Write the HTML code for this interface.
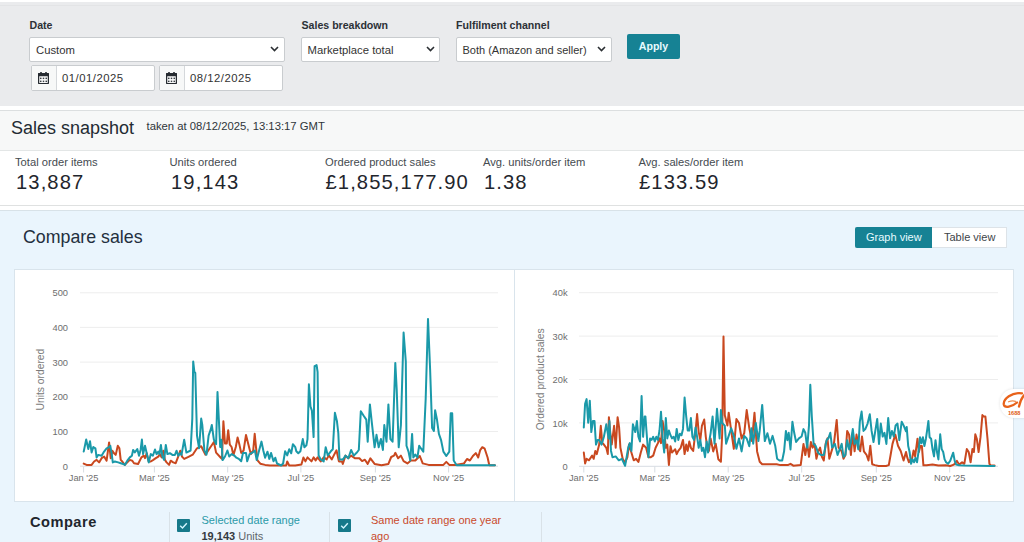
<!DOCTYPE html>
<html><head><meta charset="utf-8">
<style>
html,body{margin:0;padding:0;width:1024px;height:542px;overflow:hidden;background:#fff;}
body{font-family:"Liberation Sans",sans-serif;color:#0f1111;position:relative;}
.a{position:absolute;white-space:nowrap;}
#filters{position:absolute;left:0;top:2px;width:1024px;height:103.5px;background:#eaebed;}
#filters .line{position:absolute;left:0;top:3px;width:1024px;height:1px;background:#e3e4e6;}
.lbl{position:absolute;font-weight:bold;font-size:10.6px;color:#2c3137;}
.sel{position:absolute;background:#fff;border:1px solid #c9cccf;border-radius:2px;box-sizing:border-box;height:25px;}
.sel span{position:absolute;left:6px;top:5.5px;font-size:11.3px;color:#333;}
.chev{position:absolute;top:8px;width:9px;height:6px;}
.dt{position:absolute;background:#fff;border:1px solid #c9cccf;border-radius:2px;box-sizing:border-box;height:26px;top:63px;}
.dt .ic{position:absolute;left:0;top:0;width:23.5px;height:24px;background:#f7f8f8;border-right:1px solid #d5d8db;}
.dt span{position:absolute;left:30px;top:6px;font-size:11.3px;letter-spacing:0.5px;color:#333;}
#apply{position:absolute;left:627px;top:34px;width:53px;height:25px;background:#168294;border-radius:2px;color:#e8fbff;font-weight:bold;font-size:10.6px;text-align:center;line-height:24px;}
#snaphead{position:absolute;left:0;top:110px;width:1024px;height:41px;background:#f7f8f8;border-top:1px solid #dcdfe0;border-bottom:1px solid #e3e6e6;box-sizing:border-box;}
#metrics{position:absolute;left:0;top:151px;width:1024px;height:55px;background:#fff;border-bottom:1px solid #dfe1e1;box-sizing:border-box;}
.mlbl{position:absolute;top:5px;font-size:11.2px;color:#454b50;}
.mval{position:absolute;top:20px;font-size:20.2px;letter-spacing:1.1px;color:#1f262d;}
#blue{position:absolute;left:0;top:210px;width:1024px;height:332px;background:#eaf5fd;border-top:1px solid #d8e2e8;box-sizing:border-box;}
.panel{position:absolute;background:#fff;border:1px solid #d9e4ec;box-sizing:border-box;}
.cb{position:absolute;width:13px;height:13px;background:#16798a;border-radius:1px;}
.cb svg{position:absolute;left:0;top:0;}
#badge{position:absolute;left:1000px;top:389px;width:40px;height:29px;background:#fff;border-radius:14px 0 0 14px;box-shadow:0 0 3px rgba(0,0,0,0.12);}
</style></head><body>
<div id="filters"><div class="line"></div>
  <div class="lbl" style="left:29.5px;top:17px;">Date</div>
  <div class="sel" style="left:29px;top:35px;width:256px;"><span>Custom</span>
    <svg class="chev" style="left:240px" viewBox="0 0 9 6"><path d="M1 1 L4.5 4.5 L8 1" fill="none" stroke="#2b2f33" stroke-width="1.6"/></svg></div>
  <div class="dt" style="left:31px;width:124px;"><div class="ic"><svg style="position:absolute;left:6.2px;top:6.2px;" width="11" height="12.2" viewBox="0 0 11 12.2"><rect x="0.6" y="1.6" width="9.8" height="10" rx="0.8" fill="#fff" stroke="#262b31" stroke-width="1.3"/><rect x="0" y="1" width="11" height="3.3" rx="0.6" fill="#262b31"/><rect x="2.2" y="0" width="1.6" height="2" fill="#262b31"/><rect x="7.2" y="0" width="1.6" height="2" fill="#262b31"/><g fill="#3a4046"><rect x="2" y="5.6" width="1.5" height="1.5"/><rect x="4.75" y="5.6" width="1.5" height="1.5"/><rect x="7.5" y="5.6" width="1.5" height="1.5"/><rect x="2" y="8.6" width="1.5" height="1.5"/><rect x="4.75" y="8.6" width="1.5" height="1.5"/><rect x="7.5" y="8.6" width="1.5" height="1.5"/></g></svg></div><span>01/01/2025</span></div>
  <div class="dt" style="left:159px;width:124px;"><div class="ic"><svg style="position:absolute;left:6.2px;top:6.2px;" width="11" height="12.2" viewBox="0 0 11 12.2"><rect x="0.6" y="1.6" width="9.8" height="10" rx="0.8" fill="#fff" stroke="#262b31" stroke-width="1.3"/><rect x="0" y="1" width="11" height="3.3" rx="0.6" fill="#262b31"/><rect x="2.2" y="0" width="1.6" height="2" fill="#262b31"/><rect x="7.2" y="0" width="1.6" height="2" fill="#262b31"/><g fill="#3a4046"><rect x="2" y="5.6" width="1.5" height="1.5"/><rect x="4.75" y="5.6" width="1.5" height="1.5"/><rect x="7.5" y="5.6" width="1.5" height="1.5"/><rect x="2" y="8.6" width="1.5" height="1.5"/><rect x="4.75" y="8.6" width="1.5" height="1.5"/><rect x="7.5" y="8.6" width="1.5" height="1.5"/></g></svg></div><span>08/12/2025</span></div>

  <div class="lbl" style="left:301.5px;top:17px;">Sales breakdown</div>
  <div class="sel" style="left:300.5px;top:35px;width:139.5px;"><span>Marketplace total</span>
    <svg class="chev" style="left:124px" viewBox="0 0 9 6"><path d="M1 1 L4.5 4.5 L8 1" fill="none" stroke="#2b2f33" stroke-width="1.6"/></svg></div>

  <div class="lbl" style="left:456px;top:17px;">Fulfilment channel</div>
  <div class="sel" style="left:455.5px;top:35px;width:156px;"><span style="font-size:11px">Both (Amazon and seller)</span>
    <svg class="chev" style="left:140px" viewBox="0 0 9 6"><path d="M1 1 L4.5 4.5 L8 1" fill="none" stroke="#2b2f33" stroke-width="1.6"/></svg></div>
  <div id="apply" style="top:32px;">Apply</div>
</div>

<div id="snaphead">
  <div class="a" style="left:11px;top:7px;font-size:18px;color:#232b33;">Sales snapshot</div>
  <div class="a" style="left:146.5px;top:8.5px;font-size:11.3px;color:#2f353a;">taken at 08/12/2025, 13:13:17 GMT</div>
</div>

<div id="metrics">
  <div class="mlbl" style="left:15px;">Total order items</div>
  <div class="mval" style="left:16px;">13,887</div>
  <div class="mlbl" style="left:169.5px;">Units ordered</div>
  <div class="mval" style="left:171px;">19,143</div>
  <div class="mlbl" style="left:325px;">Ordered product sales</div>
  <div class="mval" style="left:325.5px;">£1,855,177.90</div>
  <div class="mlbl" style="left:483px;">Avg. units/order item</div>
  <div class="mval" style="left:484px;">1.38</div>
  <div class="mlbl" style="left:638.5px;">Avg. sales/order item</div>
  <div class="mval" style="left:639px;">£133.59</div>
</div>

<div id="blue">
  <div class="a" style="left:23px;top:16px;font-size:17.8px;color:#232f3e;">Compare sales</div>
  <div class="a" style="left:854.5px;top:16px;width:152px;height:21px;border:1px solid #dde3e8;background:#fff;box-sizing:border-box;"></div>
  <div class="a" style="left:854.5px;top:16px;width:77.5px;height:21px;background:#168294;border-radius:2px 0 0 2px;"></div>
  <div class="a" style="left:866px;top:20px;font-size:11px;color:#e6fbff;">Graph view</div>
  <div class="a" style="left:944px;top:20px;font-size:11px;color:#3d4449;">Table view</div>

  <div class="panel" style="left:14px;top:58px;width:501px;height:233px;border-right:none;"></div>
  <div class="panel" style="left:514px;top:58px;width:500px;height:233px;"></div>
  <div id="charts"></div>
</div>


<div id="bottom">
  <div class="a" style="left:30px;top:513.5px;font-size:14.6px;letter-spacing:0.5px;font-weight:bold;color:#1f262d;">Compare</div>
  <div class="a" style="left:168.5px;top:512px;width:1px;height:30px;background:#d9e2e8;"></div>
  <div class="a" style="left:328.5px;top:512px;width:1px;height:30px;background:#d9e2e8;"></div>
  <div class="a" style="left:541px;top:512px;width:1px;height:30px;background:#d9e2e8;"></div>
  <div class="cb" style="left:177px;top:518.5px;"><svg width="13" height="13" viewBox="0 0 13 13"><path d="M3.2 6.8 L5.5 9 L9.8 4.3" fill="none" stroke="#d4f6ff" stroke-width="1.4"/></svg></div>
  <div class="a" style="left:201.5px;top:514px;font-size:11px;color:#2b9aa8;">Selected date range</div>
  <div class="a" style="left:201.5px;top:530px;font-size:11px;color:#60666b;"><b style="color:#343a40;">19,143</b> Units</div>
  <div class="cb" style="left:337.5px;top:518.5px;"><svg width="13" height="13" viewBox="0 0 13 13"><path d="M3.2 6.8 L5.5 9 L9.8 4.3" fill="none" stroke="#d4f6ff" stroke-width="1.4"/></svg></div>
  <div class="a" style="left:371px;top:514px;font-size:11px;color:#c94a2c;">Same date range one year</div>
  <div class="a" style="left:371px;top:530px;font-size:11px;color:#c94a2c;">ago</div>
</div>
<div id="badge">
  <svg style="position:absolute;left:2px;top:2px" width="24" height="26" viewBox="0 0 24 26"><path d="M20 2.3 C10 0.8 1 8 1.8 13.5 C2.6 17.5 10 16 15 11.5" fill="none" stroke="#e8621a" stroke-width="2.3" stroke-linecap="round"/><path d="M6.5 10.8 C9 9.8 11.5 9.8 13.5 10.3" fill="none" stroke="#ef8a4a" stroke-width="1.2" stroke-linecap="round"/><path d="M17 15.5 C18 11 20 6 23 3.5" fill="none" stroke="#e8621a" stroke-width="2.3" stroke-linecap="round"/><text x="6" y="23.5" font-family="Liberation Sans" font-weight="bold" font-size="5.6" fill="#e0601a">1688</text></svg>
</div>





<!--CHARTS--><svg id="chartsvg" width="1024" height="542" viewBox="0 0 1024 542" style="position:absolute;left:0;top:0;">
<style>.yl,.xl{font-family:"Liberation Sans",sans-serif;font-size:9.3px;fill:#6e6e6e;}.at{font-family:"Liberation Sans",sans-serif;font-size:10.3px;fill:#7a7a7a;}</style>
<line x1="80" y1="466.2" x2="498" y2="466.2" stroke="#d8dde3" stroke-width="1"/>
<text x="68" y="469.8" text-anchor="end" class="yl">0</text>
<line x1="80" y1="431.5" x2="498" y2="431.5" stroke="#ededed" stroke-width="1"/>
<text x="68" y="435.1" text-anchor="end" class="yl">100</text>
<line x1="80" y1="396.8" x2="498" y2="396.8" stroke="#ededed" stroke-width="1"/>
<text x="68" y="400.40000000000003" text-anchor="end" class="yl">200</text>
<line x1="80" y1="362.1" x2="498" y2="362.1" stroke="#ededed" stroke-width="1"/>
<text x="68" y="365.70000000000005" text-anchor="end" class="yl">300</text>
<line x1="80" y1="327.4" x2="498" y2="327.4" stroke="#ededed" stroke-width="1"/>
<text x="68" y="331.0" text-anchor="end" class="yl">400</text>
<line x1="80" y1="292.8" x2="498" y2="292.8" stroke="#ededed" stroke-width="1"/>
<text x="68" y="296.40000000000003" text-anchor="end" class="yl">500</text>
<line x1="83.6" y1="466.3" x2="83.6" y2="472.5" stroke="#d8dde3" stroke-width="1"/>
<text x="83.6" y="481" text-anchor="middle" class="xl">Jan '25</text>
<line x1="154.4" y1="466.3" x2="154.4" y2="472.5" stroke="#d8dde3" stroke-width="1"/>
<text x="154.4" y="481" text-anchor="middle" class="xl">Mar '25</text>
<line x1="227.7" y1="466.3" x2="227.7" y2="472.5" stroke="#d8dde3" stroke-width="1"/>
<text x="227.7" y="481" text-anchor="middle" class="xl">May '25</text>
<line x1="300.9" y1="466.3" x2="300.9" y2="472.5" stroke="#d8dde3" stroke-width="1"/>
<text x="300.9" y="481" text-anchor="middle" class="xl">Jul '25</text>
<line x1="375.4" y1="466.3" x2="375.4" y2="472.5" stroke="#d8dde3" stroke-width="1"/>
<text x="375.4" y="481" text-anchor="middle" class="xl">Sep '25</text>
<line x1="448.6" y1="466.3" x2="448.6" y2="472.5" stroke="#d8dde3" stroke-width="1"/>
<text x="448.6" y="481" text-anchor="middle" class="xl">Nov '25</text>
<text x="0" y="0" transform="translate(43.5,379.6) rotate(-90)" text-anchor="middle" class="at">Units ordered</text>
<line x1="579" y1="466.3" x2="998" y2="466.3" stroke="#d8dde3" stroke-width="1"/>
<text x="567.6" y="469.90000000000003" text-anchor="end" class="yl">0</text>
<line x1="579" y1="422.9" x2="998" y2="422.9" stroke="#ededed" stroke-width="1"/>
<text x="567.6" y="426.5" text-anchor="end" class="yl">10k</text>
<line x1="579" y1="379.5" x2="998" y2="379.5" stroke="#ededed" stroke-width="1"/>
<text x="567.6" y="383.1" text-anchor="end" class="yl">20k</text>
<line x1="579" y1="336.1" x2="998" y2="336.1" stroke="#ededed" stroke-width="1"/>
<text x="567.6" y="339.70000000000005" text-anchor="end" class="yl">30k</text>
<line x1="579" y1="292.7" x2="998" y2="292.7" stroke="#ededed" stroke-width="1"/>
<text x="567.6" y="296.3" text-anchor="end" class="yl">40k</text>
<line x1="583.8" y1="466.3" x2="583.8" y2="472.5" stroke="#d8dde3" stroke-width="1"/>
<text x="583.8" y="481" text-anchor="middle" class="xl">Jan '25</text>
<line x1="654.8" y1="466.3" x2="654.8" y2="472.5" stroke="#d8dde3" stroke-width="1"/>
<text x="654.8" y="481" text-anchor="middle" class="xl">Mar '25</text>
<line x1="728.2" y1="466.3" x2="728.2" y2="472.5" stroke="#d8dde3" stroke-width="1"/>
<text x="728.2" y="481" text-anchor="middle" class="xl">May '25</text>
<line x1="801.7" y1="466.3" x2="801.7" y2="472.5" stroke="#d8dde3" stroke-width="1"/>
<text x="801.7" y="481" text-anchor="middle" class="xl">Jul '25</text>
<line x1="876.3" y1="466.3" x2="876.3" y2="472.5" stroke="#d8dde3" stroke-width="1"/>
<text x="876.3" y="481" text-anchor="middle" class="xl">Sep '25</text>
<line x1="949.7" y1="466.3" x2="949.7" y2="472.5" stroke="#d8dde3" stroke-width="1"/>
<text x="949.7" y="481" text-anchor="middle" class="xl">Nov '25</text>
<text x="0" y="0" transform="translate(543.5,379.3) rotate(-90)" text-anchor="middle" class="at">Ordered product sales</text>
<polyline points="83.7,463.6 86.6,464.9 91.6,464.9 94.1,461.5 96.6,459.9 99.1,462.4 101.6,458.2 104.1,456.6 106.6,460.7 109.1,442.4 110.7,458.2 112.4,450.7 114.0,453.2 115.7,454.9 117.8,445.8 119.4,448.3 120.7,459.9 122.3,461.5 124.8,464.9 127.3,462.4 129.8,459.9 132.3,460.7 134.0,463.2 138.1,464.0 141.4,457.4 143.9,455.7 145.0,458.2 146.7,453.2 148.7,461.5 150.8,461.5 153.3,459.9 155.8,458.2 158.3,456.6 159.9,454.1 161.6,457.4 163.3,450.7 164.9,459.9 166.6,462.4 169.1,464.9 170.7,460.7 173.2,462.4 175.7,463.2 178.2,456.6 180.3,450.7 182.0,456.6 184.2,458.9 188.5,456.8 192.7,454.7 197.0,448.3 201.2,446.2 205.5,454.7 209.7,448.3 213.9,442.0 216.1,452.6 220.8,457.7 222.0,458.9 223.4,421.2 225.0,443.4 226.8,443.4 228.2,430.2 229.8,444.6 231.6,447.0 233.4,455.3 235.8,447.0 237.6,437.4 239.4,444.6 241.2,452.9 243.6,450.5 246.0,435.0 248.4,444.6 250.8,454.1 253.2,450.5 254.7,433.8 256.1,448.2 257.3,460.1 260.3,463.7 265.1,464.9 269.9,465.5 281.1,465.5 286.2,465.5 287.2,461.4 289.2,465.5 295.3,465.5 301.4,464.5 303.4,457.4 305.4,461.4 307.5,457.4 309.5,459.4 311.5,461.4 313.6,457.4 315.6,460.4 317.6,457.4 320.7,461.4 323.7,457.4 326.7,459.4 328.8,455.4 331.8,459.4 333.8,455.4 336.5,450.3 338.9,461.4 342.0,461.4 342.8,463.9 345.5,455.6 348.3,458.3 351.1,455.6 355.2,458.3 359.4,458.3 362.1,461.1 364.9,459.7 367.7,463.9 370.4,458.3 374.6,463.9 381.5,465.3 388.4,463.9 391.2,457.0 394.0,455.6 395.3,452.8 398.1,458.3 400.9,455.6 403.6,461.1 407.4,463.4 410.9,460.5 415.3,460.5 419.8,456.0 422.7,463.4 428.6,464.9 443.4,464.9 446.3,461.9 449.3,464.9 455.2,464.9 464.0,463.4 467.0,459.0 469.9,460.5 472.9,456.0 475.8,453.1 478.2,457.5 480.2,450.1 482.3,447.2 484.7,448.7 487.6,457.5 489.3,465.3 494.9,465.3" fill="none" stroke="#c9481f" stroke-width="2" stroke-linejoin="round" stroke-linecap="round"/>
<polyline points="83.7,451.6 86.2,439.5 88.3,449.1 90.0,441.2 91.6,452.4 93.3,447.0 95.4,448.3 96.6,457.4 98.3,454.9 101.6,455.7 104.1,451.6 106.6,448.3 108.6,447.4 110.3,445.8 111.6,453.2 112.8,462.4 114.9,461.5 118.2,462.4 120.7,463.2 123.2,464.0 124.8,464.9 127.3,460.7 129.8,457.4 131.9,455.7 133.1,449.9 134.8,452.4 137.3,449.1 139.0,455.7 140.6,449.9 141.9,439.5 143.1,454.1 145.0,445.8 146.7,453.2 148.7,462.4 150.8,454.1 152.9,455.7 155.0,449.5 156.6,454.1 158.3,451.6 159.5,454.1 160.9,444.9 162.4,456.6 164.1,459.9 165.8,444.9 167.4,454.1 169.9,453.2 172.4,454.9 174.9,454.9 176.6,450.7 178.2,455.7 179.9,453.2 181.5,454.9 184.2,439.8 186.4,452.6 190.6,450.5 192.3,418.6 193.2,361.4 194.4,372.0 195.3,373.0 197.0,435.6 199.1,448.3 201.2,418.6 202.3,425.0 204.4,450.5 206.5,454.7 208.6,435.6 210.8,429.2 211.8,425.0 213.9,439.8 216.1,444.1 217.5,392.1 220.2,447.0 221.4,439.8 222.6,460.1 225.0,456.5 227.4,450.5 229.2,456.5 231.6,454.1 234.0,455.3 236.4,457.7 238.8,458.9 241.2,461.3 243.0,452.9 246.0,452.9 247.2,461.3 249.6,454.1 252.0,452.9 254.9,450.5 256.7,460.1 259.1,450.5 261.5,441.6 263.3,450.5 265.1,457.7 267.5,451.7 269.3,458.9 271.1,452.9 273.5,461.3 275.3,457.7 277.0,463.5 281.1,465.5 283.1,463.5 285.1,451.3 287.2,455.4 289.2,449.3 291.2,453.3 292.9,444.2 295.3,447.2 296.3,451.3 298.3,453.3 300.4,451.3 302.8,439.1 304.4,447.2 306.4,445.2 307.5,439.1 308.9,384.3 310.5,406.7 311.9,410.7 313.6,437.1 314.6,366.1 316.6,365.1 317.6,372.2 318.6,455.4 320.7,459.4 323.7,461.4 325.7,447.2 327.8,455.4 330.8,451.3 332.8,449.3 334.9,412.8 336.9,420.9 338.3,433.0 339.5,459.4 342.0,459.4 342.8,459.7 345.5,455.6 348.3,458.3 351.1,450.0 353.8,455.6 356.6,452.8 358.8,450.0 360.8,411.3 363.5,415.5 366.3,419.6 367.7,441.7 369.9,404.4 371.8,422.4 374.6,447.3 376.5,434.8 378.7,447.3 380.9,439.0 382.9,450.0 384.3,425.1 386.5,441.7 388.4,404.4 390.4,439.0 392.6,441.7 395.3,362.9 396.7,389.2 398.7,447.3 400.9,425.1 403.6,332.5 405.8,361.5 406.5,445.7 408.5,451.6 410.3,460.5 412.1,433.9 413.3,457.5 415.3,454.6 417.4,457.5 419.2,445.7 421.2,448.7 423.3,451.6 425.7,398.5 428.0,318.9 430.1,369.0 432.1,428.0 433.9,431.0 435.1,410.3 436.9,419.2 438.9,433.9 441.0,439.8 443.4,451.6 446.3,456.0 449.3,451.6 450.7,413.3 452.2,413.3 453.7,460.5 456.6,465.3 464.0,465.3 478.8,465.3 490.6,465.3 494.9,465.3" fill="none" stroke="#1a99a9" stroke-width="2" stroke-linejoin="round" stroke-linecap="round"/>
<polyline points="583.8,452.5 585.1,463.5 586.6,458.8 589.0,460.3 592.1,455.6 593.7,458.8 595.3,450.9 596.8,454.1 599.2,444.6 600.8,425.8 602.3,443.1 603.9,444.6 606.3,447.8 607.8,454.1 608.9,417.2 610.2,432.1 611.7,444.6 614.1,425.8 615.7,447.8 617.6,417.2 619.1,427.4 620.4,447.8 622.7,458.8 625.1,462.7 627.4,457.2 629.0,444.6 631.4,452.5 633.7,460.3 636.1,458.8 638.4,461.9 640.8,452.5 643.1,444.6 646.1,447.8 648.5,457.2 650.8,457.2 653.2,455.6 655.6,447.8 657.9,443.1 659.5,438.4 661.0,443.1 662.6,421.1 664.2,430.5 665.8,447.8 667.3,444.6 668.9,465.0 670.5,446.2 672.0,452.5 673.6,450.9 675.2,449.3 676.7,454.1 678.3,450.9 680.7,447.8 683.0,439.9 684.6,454.1 686.2,444.6 687.7,450.9 689.3,441.5 690.9,447.8 693.2,450.9 695.6,430.5 697.1,414.0 698.7,432.1 700.3,439.9 701.9,425.8 704.2,419.5 705.8,436.8 707.3,447.8 708.9,450.9 710.6,438.5 713.2,451.4 715.7,443.7 718.3,459.2 720.9,461.7 722.2,433.3 723.5,336.5 724.8,415.2 727.4,425.6 728.7,412.7 731.2,430.7 733.8,448.8 736.4,419.1 739.0,423.0 741.6,438.5 744.2,433.3 746.7,410.1 749.3,428.2 751.9,441.1 754.5,412.7 757.1,451.4 759.7,461.7 762.2,464.3 767.4,464.3 776.7,464.2 780.4,465.1 784.1,465.1 787.8,465.1 790.5,463.8 793.3,465.7 800.7,465.1 803.5,443.9 805.3,455.0 807.2,443.9 809.0,456.8 810.9,442.0 812.7,447.6 814.6,443.9 816.4,458.7 818.3,451.3 820.1,447.6 821.9,456.8 823.8,460.5 825.6,443.9 827.5,438.3 829.3,458.7 832.1,449.4 833.9,443.9 836.7,419.9 838.6,447.6 841.7,451.3 843.5,458.7 845.4,455.0 847.2,430.9 849.1,434.6 850.9,455.0 852.8,432.8 854.6,451.3 856.5,434.6 858.3,443.9 860.2,451.3 862.0,436.5 863.9,451.3 866.6,455.0 868.5,460.5 870.3,445.7 872.2,464.2 874.9,465.1 878.6,466.0 886.0,466.0 888.8,465.1 890.6,455.0 892.5,443.9 895.3,434.6 898.0,445.7 900.8,451.3 903.6,460.5 906.0,452.0 907.4,457.9 908.9,462.3 910.4,459.4 911.9,459.4 913.6,450.5 915.1,456.4 917.5,438.7 918.9,452.0 920.4,446.1 921.9,446.1 923.4,465.3 926.6,465.3 932.5,464.6 938.4,465.6 945.8,465.3 950.2,466.0 953.9,464.6 956.9,460.9 959.1,464.6 962.1,462.3 964.3,463.8 966.8,449.1 968.7,452.0 970.6,462.3 972.4,449.1 973.9,452.0 975.3,434.3 976.8,438.7 978.6,452.0 980.5,437.2 982.4,415.1 983.9,416.6 985.4,416.6 987.5,438.7 989.4,463.8 990.8,465.6 994.5,465.6" fill="none" stroke="#c9481f" stroke-width="2" stroke-linejoin="round" stroke-linecap="round"/>
<polyline points="583.8,427.4 585.1,403.8 586.6,399.1 588.2,422.7 589.8,400.7 591.3,432.1 592.9,421.1 594.5,421.1 596.0,444.6 597.6,439.9 599.2,439.9 601.5,444.6 603.9,436.8 606.3,424.2 608.6,438.4 609.4,421.1 611.0,450.9 612.5,457.2 615.7,456.4 618.8,460.3 621.9,458.8 625.1,465.8 628.2,447.8 629.8,443.1 631.4,450.9 632.9,424.2 635.3,432.1 636.9,421.1 638.4,436.8 640.0,441.5 641.6,396.0 643.1,436.8 644.7,416.4 645.4,416.4 646.9,436.8 648.5,457.2 650.1,438.4 651.6,439.9 653.2,436.8 654.8,441.5 656.3,436.8 657.9,439.9 659.5,430.5 661.0,411.7 662.6,438.4 664.2,452.5 665.8,418.0 667.3,438.4 668.9,430.5 670.5,435.2 672.0,438.4 673.6,436.8 675.2,441.5 676.7,428.9 678.3,439.9 679.9,433.7 681.5,435.2 683.0,428.9 684.6,397.6 686.2,416.4 687.7,430.5 689.3,430.5 690.9,418.0 692.4,436.8 694.0,439.9 695.6,427.4 697.1,436.8 698.7,447.8 700.3,439.9 701.9,450.9 703.4,447.8 705.0,457.2 706.6,441.5 708.1,452.5 709.7,438.4 710.6,433.3 712.6,416.5 714.5,443.7 717.0,408.8 719.6,438.5 720.9,410.1 722.2,423.0 724.8,425.6 726.1,443.7 728.7,435.9 731.2,428.2 733.8,435.9 736.4,448.8 739.0,438.5 741.6,451.4 744.2,435.9 746.7,438.5 749.3,446.2 751.4,428.2 753.2,443.7 755.8,423.0 758.4,441.1 759.7,430.7 762.2,404.9 764.8,441.1 767.4,433.3 770.0,443.7 772.6,435.9 775.2,445.7 777.1,458.7 779.5,460.5 782.2,460.5 784.1,451.3 785.9,430.9 787.4,440.2 788.7,432.8 790.5,449.4 792.4,421.7 794.2,432.8 796.1,442.0 798.9,438.3 801.6,436.5 803.5,429.1 805.3,432.8 807.2,447.6 809.0,425.4 810.3,384.8 811.8,416.2 813.6,443.9 815.5,445.7 818.3,453.1 821.0,455.0 823.8,455.0 826.6,440.2 828.4,438.3 830.3,432.8 832.1,447.6 834.9,443.9 837.6,455.0 841.7,443.9 843.5,456.8 845.4,455.0 847.2,440.2 849.1,449.4 850.9,442.0 852.8,429.1 854.6,443.9 856.5,440.2 858.3,449.4 859.8,421.7 861.6,411.6 863.5,430.9 865.3,429.1 867.6,423.6 869.8,414.3 871.6,430.9 873.5,442.0 875.3,430.9 877.2,418.9 879.0,443.9 880.8,423.6 882.7,436.5 884.5,432.8 886.4,443.9 888.2,418.0 890.1,438.3 891.9,430.9 893.8,436.5 895.6,425.4 897.5,423.6 899.3,440.2 901.7,421.7 903.6,425.4 906.0,431.3 906.7,426.9 908.2,446.1 909.6,452.0 911.1,463.8 912.6,459.4 914.1,462.3 915.5,457.9 917.0,462.3 918.5,452.0 920.0,437.2 921.5,443.2 922.9,437.2 924.4,446.1 925.9,438.7 927.4,428.4 928.4,421.0 929.6,437.2 931.1,438.7 932.5,449.1 934.0,456.4 935.5,440.2 937.0,452.0 938.4,459.4 940.2,434.3 941.7,449.1 943.2,452.0 944.6,459.4 946.1,462.3 948.0,463.8 950.2,460.9 953.2,452.7 954.7,460.9 956.2,464.6 959.1,465.3 965.0,465.6 991.6,466.0 994.5,466.0" fill="none" stroke="#1a99a9" stroke-width="2" stroke-linejoin="round" stroke-linecap="round"/>
</svg><!--/CHARTS-->
</body></html>
